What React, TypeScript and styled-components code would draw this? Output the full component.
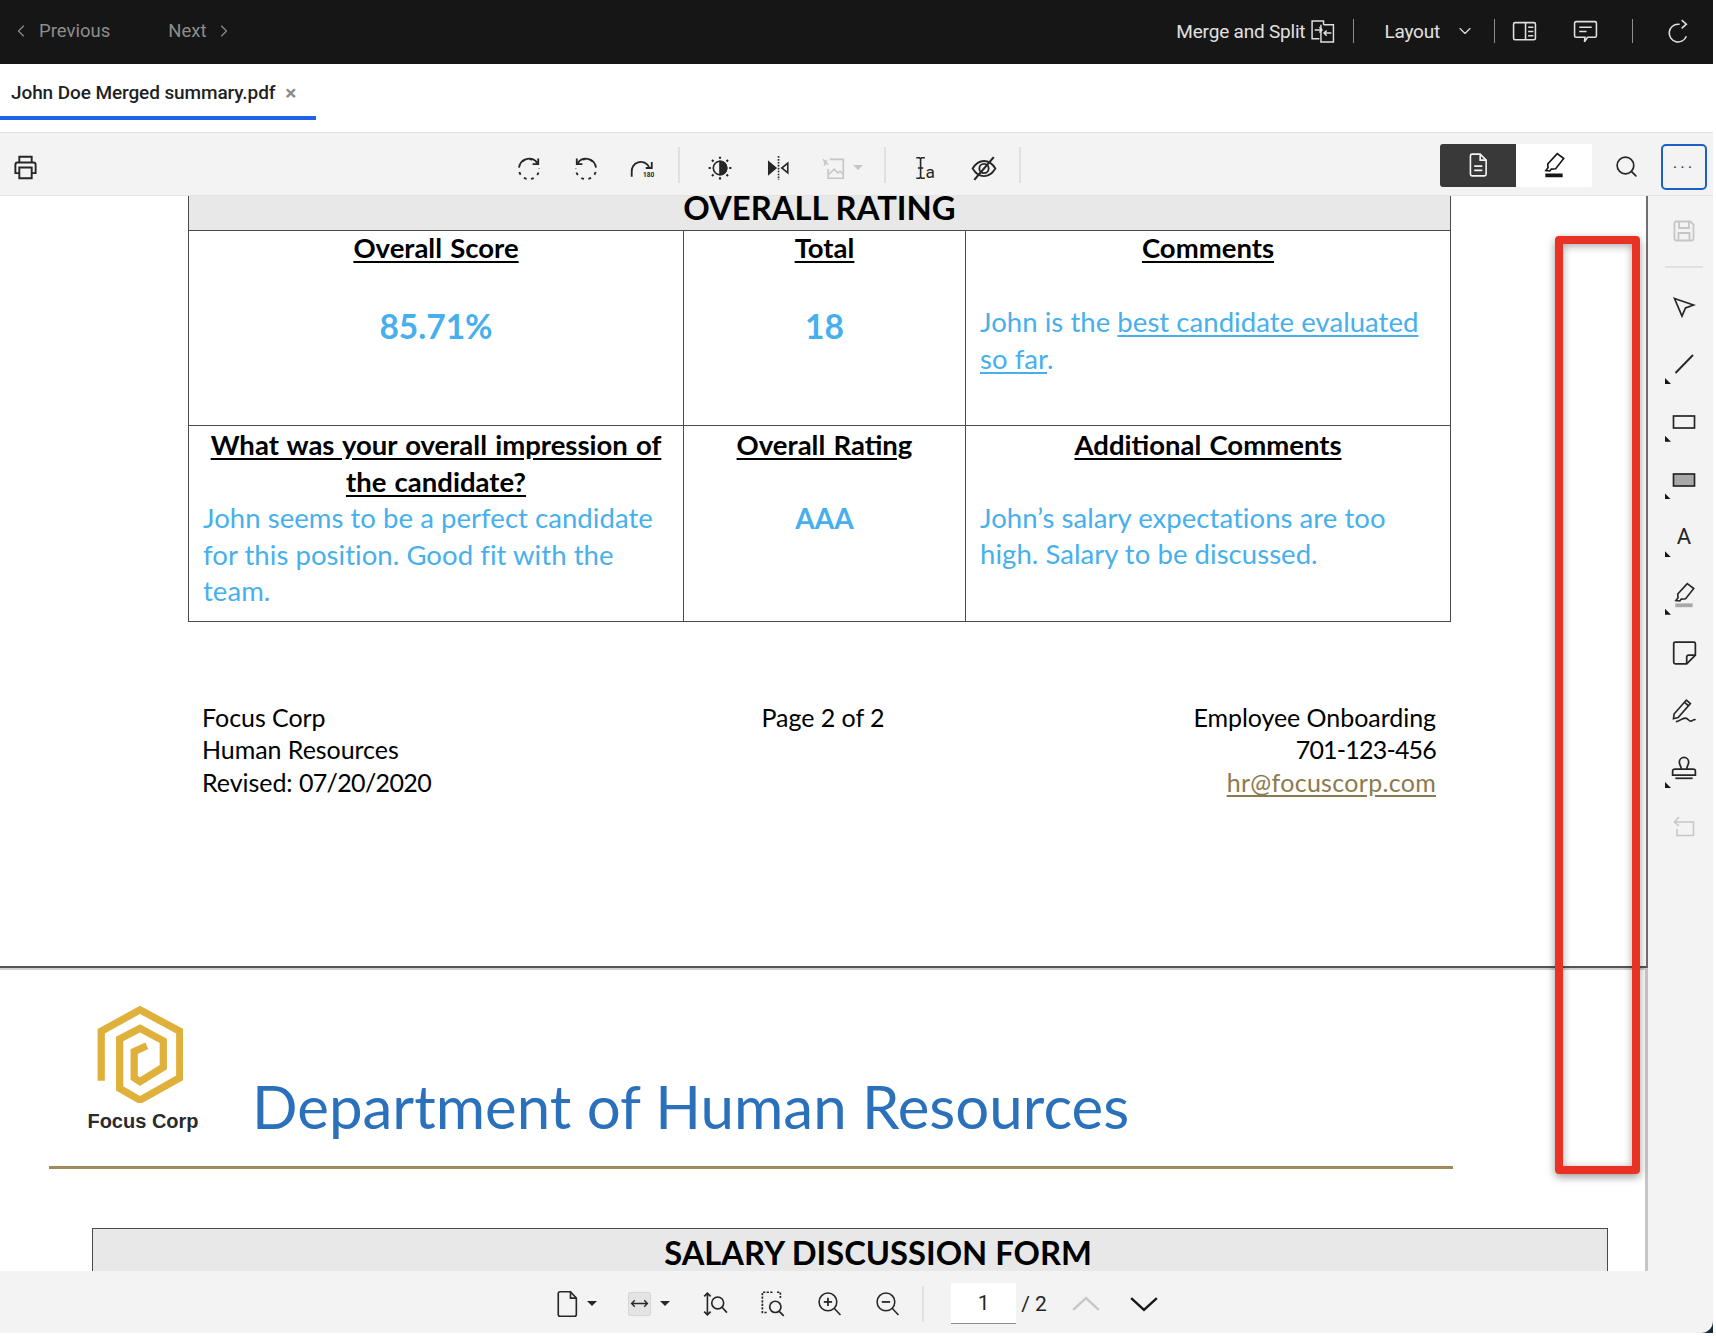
import React from "react";
import styled, { createGlobalStyle } from "styled-components";
import { ChevronDown, ChevronLeft, ChevronRight, Search } from "lucide-react";

type IconProps = { size?: number; stroke?: number; children: React.ReactNode };

const Icon = ({ size = 24, stroke = 1.5, children }: IconProps) => (
    <svg width={ size } height={ size } viewBox="0 0 24 24" fill="none" stroke="currentColor" strokeWidth={ stroke }>
        { children }
    </svg>
);

const DashedTurn = ({ flip }: { flip?: boolean }) => (
    <Icon size={ 26 } stroke={ 1.7 }>
        <g transform={ flip ? "matrix(-1 0 0 1 24 0)" : undefined }>
            <path d="M3.2 9.5A9.5 9.5 0 0 1 19.5 7" />
            <path d="M20.5 3.2v5.2h-5.2" />
            <circle cx="12" cy="13" r="9.3" strokeDasharray="2.6 4.2" strokeDashoffset="-10" />
        </g>
    </Icon>
);

const TurnHalf = () => (
    <Icon size={ 26 } stroke={ 1.7 }>
        <path d="M2.5 20V16a8.5 8.5 0 0 1 16-5" />
        <path d="M21 6.5V12h-5.5" />
        <text x="13" y="20" fontSize="6" fontFamily="Roboto" fontWeight="700" stroke="none" fill="currentColor">180</text>
    </Icon>
);

const Contrast = () => (
    <Icon size={ 26 } stroke={ 1.5 }>
        <circle cx="12" cy="12" r="6.2" />
        <path d="M12 5.8a6.2 6.2 0 0 1 0 12.4z" fill="currentColor" />
        <path d="M12 1.5v2M12 20.5v2M1.5 12h2M20.5 12h2M4.6 4.6l1.4 1.4M18 18l1.4 1.4M4.6 19.4L6 18M18 6l1.4-1.4" strokeWidth="2" />
    </Icon>
);

const Mirror = () => (
    <Icon size={ 26 } stroke={ 1.5 }>
        <path d="M3.5 6.5L10 12l-6.5 5.5z" fill="currentColor" />
        <path d="M21 7.5L15.5 12 21 16.5z" />
        <path d="M12.5 1v22" strokeDasharray="1.5 1.2" />
    </Icon>
);

const ImageOff = () => (
    <Icon size={ 26 } stroke={ 1.5 }>
        <path d="M9 4h12.5v17.5H7.5V13" />
        <path d="M8 18l5-5 3.5 3.5 2-1.5 3 3" />
        <path d="M2 3l3 2 2-1-1 2.5L8.5 9 5.5 8.5 3.5 10.5 4 7.5z" fill="currentColor" stroke="none" />
    </Icon>
);

const TextSelect = () => (
    <Icon size={ 26 } stroke={ 1.5 }>
        <path d="M3 2.5h3l1 1 1-1h3M7 3.5v17M3 21.5h3l1-1 1 1h3M4.5 12h5" />
        <text x="11.5" y="21" fontSize="16" fontFamily="Roboto" stroke="none" fill="currentColor">a</text>
    </Icon>
);

const EyeSlash = () => (
    <Icon size={ 26 } stroke={ 1.7 }>
        <path d="M1.5 12.5C4.5 7.5 8 5.5 12 5.5s7.5 2 10.5 7c-3 5-6.5 7-10.5 7s-7.5-2-10.5-7z" />
        <circle cx="12" cy="12.5" r="4.3" />
        <path d="M21 2L3 23" strokeWidth="2" />
    </Icon>
);

const Printer = () => (
    <Icon size={ 27 } stroke={ 1.7 }>
        <path d="M6.5 7.5V2.5h11v5" />
        <path d="M6.5 17H3V9.5a2 2 0 0 1 2-2h14a2 2 0 0 1 2 2V17h-3.5" />
        <path d="M6.5 12h11v9.5h-11z" />
    </Icon>
);

const PageNote = () => (
    <Icon size={ 26 } stroke={ 1.5 }>
        <path d="M5 3.5A1.5 1.5 0 0 1 6.5 2H14l5.5 5.5v13A1.5 1.5 0 0 1 18 22H6.5A1.5 1.5 0 0 1 5 20.5z" />
        <path d="M14 2v5.5h5.5M8.5 13h7.5M8.5 17h7.5" />
    </Icon>
);

const Marker = ({ bar = "currentColor" }: { bar?: string }) => (
    <Icon size={ 26 } stroke={ 1.5 }>
        <path d="M15 1.5L21 6l-7.5 9.5-4 .3-1.3 1.7-3.7-.3 2-2.7-.3-3.5z" />
        <path d="M4 21.5h16" stroke={ bar } strokeWidth="3.5" />
    </Icon>
);

const Merge = () => (
    <Icon size={ 25 } stroke={ 1.4 }>
        <path d="M13 5.5V2H2v17h7" />
        <path d="M13 5.5h9.5V22H10.5V5.5" />
        <path d="M4.5 10.5h7M9 8l2.5 2.5L9 13" />
        <path d="M20.5 13.5h-7M16 11l-2.5 2.5L16 16" />
    </Icon>
);

const SidePanel = () => (
    <Icon size={ 25 } stroke={ 1.5 }>
        <rect x="1.5" y="3.5" width="21" height="16.5" rx="1.5" />
        <path d="M13 3.5V20M15.5 8h5M15.5 12h5M15.5 16h5" />
    </Icon>
);

const Comment = () => (
    <Icon size={ 25 } stroke={ 1.5 }>
        <path d="M3 2.5h18a1.5 1.5 0 0 1 1.5 1.5v12a1.5 1.5 0 0 1-1.5 1.5h-7L11 22l.5-4.5H3A1.5 1.5 0 0 1 1.5 16V4A1.5 1.5 0 0 1 3 2.5z" />
        <path d="M6 8h12M6 12h7" />
    </Icon>
);

const Refresh = () => (
    <Icon size={ 25 } stroke={ 1.5 }>
        <path d="M14 5H12.5a8.5 8.5 0 1 0 8 11.5" />
        <path d="M16 1l4.5 4-4.5 4" />
    </Icon>
);

const ArrowTool = () => (
    <Icon size={ 24 } stroke={ 1.7 }>
        <path d="M2.5 3.5L21.5 10l-8 3-3.5 8z" />
    </Icon>
);

const LineTool = () => (
    <Icon size={ 24 } stroke={ 1.9 }>
        <path d="M3.5 21L21 3" />
    </Icon>
);

const RectTool = ({ filled }: { filled?: boolean }) => (
    <Icon size={ 24 } stroke={ 1.7 }>
        <rect x="1.5" y="6" width="21" height="12" fill={ filled ? "#a8a8a8" : "none" } />
    </Icon>
);

const NoteTool = () => (
    <Icon size={ 26 } stroke={ 1.6 }>
        <path d="M14.5 22H4a1.5 1.5 0 0 1-1.5-1.5v-17A1.5 1.5 0 0 1 4 2h17a1.5 1.5 0 0 1 1.5 1.5V14z" />
        <path d="M22.5 14h-6a2 2 0 0 0-2 2v6" />
    </Icon>
);

const SignTool = () => (
    <Icon size={ 28 } stroke={ 1.4 }>
        <path d="M3.5 15.5L14 3.5l3.5 3L7 18.5l-4 1z" />
        <path d="M12.5 5.5l3.5 3" />
        <path d="M5 22c3 0 5-3 8-3s3 3 5 2.5 2.5-2 4-1" />
    </Icon>
);

const StampTool = () => (
    <Icon size={ 26 } stroke={ 1.6 }>
        <path d="M9.5 13c0-3-1.8-3.5-1.8-6.5a4.3 4.3 0 0 1 8.6 0c0 3-1.8 3.5-1.8 6.5" />
        <path d="M3.5 13h17a2 2 0 0 1 2 2v3.5h-21V15a2 2 0 0 1 2-2z" />
        <path d="M4 21.5h16" />
    </Icon>
);

const UndoTool = () => (
    <Icon size={ 24 } stroke={ 1.5 }>
        <path d="M3 8h18.5v13.5H5V15" />
        <path d="M7 3L2.5 8 7 12" />
    </Icon>
);

const SaveTool = () => (
    <Icon size={ 24 } stroke={ 1.8 }>
        <path d="M2.5 4A1.5 1.5 0 0 1 4 2.5h14.5l3 3V20a1.5 1.5 0 0 1-1.5 1.5H4A1.5 1.5 0 0 1 2.5 20z" />
        <path d="M7 2.5v6.5h10V2.5M6.5 21.5V14h11v7.5" />
    </Icon>
);

const BlankPage = () => (
    <Icon size={ 28 } stroke={ 1.4 }>
        <path d="M4.5 3A1.5 1.5 0 0 1 6 1.5h9l5 5.5v14a1.5 1.5 0 0 1-1.5 1.5H6A1.5 1.5 0 0 1 4.5 21z" />
        <path d="M15 1.5V7h5" />
    </Icon>
);

const FitWidth = () => (
    <Icon size={ 19 } stroke={ 1.7 }>
        <path d="M2 12h20M6 8l-4 4 4 4M18 8l4 4-4 4" />
    </Icon>
);

const FitHeight = () => (
    <Icon size={ 26 } stroke={ 1.5 }>
        <path d="M5 2v20M2 5l3-3 3 3M2 19l3 3 3-3" />
        <circle cx="14.5" cy="11" r="5.5" />
        <path d="M18.5 15l4.5 5" />
    </Icon>
);

const FitPage = () => (
    <Icon size={ 27 } stroke={ 1.5 }>
        <path d="M12 2H3v18h5M16 2h3v5" strokeDasharray="2 1.2" />
        <circle cx="14.5" cy="15" r="5" />
        <path d="M18 19l4 4" />
    </Icon>
);

const ZoomGlass = ({ plus }: { plus?: boolean }) => (
    <Icon size={ 25 } stroke={ 1.5 }>
        <circle cx="10.5" cy="10.5" r="8.5" />
        <path d="M16.5 16.5l6 6.5" />
        <path d="M6.5 10.5h8" strokeWidth="1.7" />
        { plus && <path d="M10.5 6.5v8" strokeWidth="1.7" /> }
    </Icon>
);

const BigChevron = ({ up }: { up?: boolean }) => (
    <Icon size={ 28 } stroke={ 2 }>
        <path d={ up ? "M1 17L12 7l11 10" : "M1 7l11 10L23 7" } />
    </Icon>
);

const LogoMark = () => (
    <LogoSvg width="86" height="97" viewBox="0 0 88 100" fill="none" stroke="#dfb13a" strokeWidth="7.5">
        <path d="M4 77V26L44 4l41 22v48L44 97 23 85V34l21-11 24 13v27L44 78l-6-4V47l13-6" />
    </LogoSvg>
);

const App: React.FC = () => {
    // rail tools, top to bottom
    const tools = [
        { icon: <ArrowTool />, flyout: false, muted: false },
        { icon: <LineTool />, flyout: true, muted: false },
        { icon: <RectTool />, flyout: true, muted: false },
        { icon: <RectTool filled />, flyout: true, muted: false },
        { icon: <ToolLetter>A</ToolLetter>, flyout: true, muted: false },
        { icon: <Marker bar="#a8a8a8" />, flyout: true, muted: false },
        { icon: <NoteTool />, flyout: false, muted: false },
        { icon: <SignTool />, flyout: false, muted: false },
        { icon: <StampTool />, flyout: true, muted: false },
        { icon: <UndoTool />, flyout: false, muted: true },
    ];

    return <Screen>
        <GlobalStyle />
        <TopBar>
            <NavLink><ChevronLeft size={ 20 } strokeWidth={ 1.4 } />Previous</NavLink>
            <NavLink $ml={ 58 }>Next<ChevronRight size={ 20 } strokeWidth={ 1.4 } /></NavLink>
            <TopActions>
                <TopLabel>Merge and Split</TopLabel>
                <TopIcon $ml={ 5 }><Merge /></TopIcon>
                <TopDivider $ml={ 18 } />
                <TopLabel $ml={ 30 }>Layout</TopLabel>
                <TopIcon $ml={ 15 }><ChevronDown size={ 20 } strokeWidth={ 1.4 } /></TopIcon>
                <TopDivider $ml={ 19 } />
                <TopIcon $ml={ 17 }><SidePanel /></TopIcon>
                <TopIcon $ml={ 36 }><Comment /></TopIcon>
                <TopDivider $ml={ 34 } />
                <TopIcon $ml={ 32 }><Refresh /></TopIcon>
            </TopActions>
        </TopBar>

        <TabBar>
            <FileTab>
                John Doe Merged summary.pdf
                <TabClose>×</TabClose>
            </FileTab>
        </TabBar>

        <ToolBar>
            <ToolButton $w={ 50 }><Printer /></ToolButton>
            <CenterTools>
                <ToolButton $w={ 56.5 }><DashedTurn /></ToolButton>
                <ToolButton $w={ 56.5 }><DashedTurn flip /></ToolButton>
                <ToolButton $w={ 56.5 }><TurnHalf /></ToolButton>
                <ToolDivider $ml={ 7 } $mr={ 11 } />
                <ToolButton $w={ 58 }><Contrast /></ToolButton>
                <ToolButton $w={ 58 }><Mirror /></ToolButton>
                <ToolButton $w={ 58 } $muted $indent><ImageOff /><Caret $ml={ 7 } $muted /></ToolButton>
                <ToolDivider $ml={ 19 } $mr={ 11 } />
                <ToolButton $w={ 58 }><TextSelect /></ToolButton>
                <ToolButton $w={ 58 }><EyeSlash /></ToolButton>
                <ToolDivider $ml={ 6 } />
            </CenterTools>
            <ViewToggle>
                <ToggleHalf $active><PageNote /></ToggleHalf>
                <ToggleHalf><Marker /></ToggleHalf>
            </ViewToggle>
            <SearchSlot><Search size={ 25 } strokeWidth={ 1.6 } /></SearchSlot>
            <MoreButton>···</MoreButton>
        </ToolBar>

        <Workspace>
            <Viewer>
                <PageOne>
                    <RatingTable>
                        <colgroup>
                            <col width="495" />
                            <col width="282" />
                            <col width="485" />
                        </colgroup>
                        <tbody>
                            <tr>
                                <TitleCell colSpan={ 3 }>OVERALL RATING</TitleCell>
                            </tr>
                            <ScoreRow>
                                <Cell $center>
                                    <CellHead $raised>Overall Score</CellHead>
                                    <ScoreValue>85.71%</ScoreValue>
                                </Cell>
                                <Cell $center>
                                    <CellHead $raised>Total</CellHead>
                                    <ScoreValue>18</ScoreValue>
                                </Cell>
                                <Cell>
                                    <CellHead $center $raised>Comments</CellHead>
                                    <Answer $gap={ 38 }>John is the <u>best candidate evaluated so far</u>.</Answer>
                                </Cell>
                            </ScoreRow>
                            <ScoreRow>
                                <Cell>
                                    <CellHead $center>What was your overall impression of the candidate?</CellHead>
                                    <Answer>John seems to be a perfect candidate for this position. Good fit with the team.</Answer>
                                </Cell>
                                <Cell $center>
                                    <CellHead>Overall Rating</CellHead>
                                    <GradeValue>AAA</GradeValue>
                                </Cell>
                                <Cell>
                                    <CellHead $center>Additional Comments</CellHead>
                                    <Answer $gap={ 36 }>John’s salary expectations are too high. Salary to be discussed.</Answer>
                                </Cell>
                            </ScoreRow>
                        </tbody>
                    </RatingTable>
                    <PageFooter>
                        <div>Focus Corp<br />Human Resources<br />Revised: <Tracked $ls={ -0.65 }>07/20/2020</Tracked></div>
                        <FooterMiddle>Page 2 of 2</FooterMiddle>
                        <FooterRight>
                            Employee Onboarding<br />
                            <Tracked $ls={ -0.8 }>701-123-456</Tracked><br />
                            <MailLink>hr@focuscorp.com</MailLink>
                        </FooterRight>
                    </PageFooter>
                </PageOne>
                <PageTwo>
                    <LetterHead>
                        <LogoBlock>
                            <LogoMark />
                            <LogoName>Focus Corp</LogoName>
                        </LogoBlock>
                        <DeptTitle>Department of Human Resources</DeptTitle>
                    </LetterHead>
                    <GoldRule />
                    <FormBox>SALARY DISCUSSION FORM</FormBox>
                </PageTwo>
                <Callout />
            </Viewer>
            <SideRail>
                <RailButton $muted $first><SaveTool /></RailButton>
                <RailDivider />
                { tools.map((tool, i) => (
                    <RailButton key={ i } $muted={ tool.muted }>
                        { tool.icon }
                        { tool.flyout && <Flyout /> }
                    </RailButton>
                )) }
            </SideRail>
        </Workspace>

        <BottomBar>
            <BottomIcon><BlankPage /></BottomIcon>
            <Caret $ml={ 6 } />
            <FitBox $ml={ 31 }><FitWidth /></FitBox>
            <Caret $ml={ 9 } />
            <BottomIcon $ml={ 32 }><FitHeight /></BottomIcon>
            <BottomIcon $ml={ 31 }><FitPage /></BottomIcon>
            <BottomIcon $ml={ 31 }><ZoomGlass plus /></BottomIcon>
            <BottomIcon $ml={ 33 }><ZoomGlass /></BottomIcon>
            <BottomDivider />
            <PageInput>1</PageInput>
            <PageTotal>/ 2</PageTotal>
            <PageArrow $ml={ 25 } $muted><BigChevron up /></PageArrow>
            <PageArrow $ml={ 30 }><BigChevron /></PageArrow>
        </BottomBar>
    </Screen>
}

export default App;

const GlobalStyle = createGlobalStyle`
  * {
    box-sizing: border-box;
  }

  body {
    margin: 0;
    background: #fff;
    font-family: Roboto, "Liberation Sans", sans-serif;
  }
`;

const Screen = styled.div`
  width: 1713px;
  height: 1333px;
  display: flex;
  flex-direction: column;
  background: #0f2b3d;
  overflow: hidden;
`;

const TopBar = styled.header`
  height: 64px;
  flex: none;
  display: flex;
  align-items: center;
  padding: 0 23px 2px 11px;
  background: #161616;
  color: #8d8d8d;
  font-size: 18.5px;
`;

const NavLink = styled.span<{ $ml?: number }>`
  display: flex;
  align-items: center;
  gap: 8px;
  margin-left: ${ props => props.$ml ?? 0 }px;
`;

const TopActions = styled.div`
  margin-left: auto;
  display: flex;
  align-items: center;
  color: #e0e0e0;
`;

const TopLabel = styled.span<{ $ml?: number }>`
  margin-left: ${ props => props.$ml ?? 0 }px;
  font-size: 19px;
  letter-spacing: -0.2px;
`;

const TopIcon = styled.span<{ $ml?: number }>`
  display: flex;
  margin-left: ${ props => props.$ml ?? 0 }px;
`;

const TopDivider = styled.span<{ $ml: number }>`
  width: 1px;
  height: 24px;
  margin-left: ${ props => props.$ml }px;
  background: #8d8d8d;
`;

const TabBar = styled.div`
  height: 69px;
  flex: none;
  background: #fff;
  border-bottom: 1px solid #e0e0e0;
`;

const FileTab = styled.div`
  width: 316px;
  height: 56px;
  display: flex;
  align-items: center;
  padding: 5px 0 0 11px;
  border-bottom: 4px solid #1f62e8;
  color: #1f1f1f;
  font-size: 19px;
  font-weight: 500;
  letter-spacing: -0.1px;
`;

const TabClose = styled.span`
  margin-left: 10px;
  color: #8d8d8d;
  font-size: 21px;
  font-weight: 700;
`;

const ToolBar = styled.div`
  height: 63px;
  flex: none;
  display: flex;
  align-items: center;
  padding: 2px 6px 0 0;
  background: #f3f3f3;
  border-bottom: 1px solid #e3e3e3;
  color: #262626;
`;

const CenterTools = styled.div`
  display: flex;
  align-items: center;
  margin-left: 451px;
`;

const ToolButton = styled.span<{ $w: number; $muted?: boolean; $indent?: boolean }>`
  width: ${ props => props.$w }px;
  height: 40px;
  flex: none;
  display: flex;
  align-items: center;
  justify-content: center;
  padding: 5px 0 0 ${ props => props.$indent ? "12px" : "0" };
  color: ${ props => props.$muted ? "#c6c6c6" : "inherit" };
`;

const ToolDivider = styled.span<{ $ml: number; $mr?: number }>`
  width: 2px;
  height: 36px;
  margin: 0 ${ props => props.$mr ?? 0 }px 0 ${ props => props.$ml }px;
  background: #e0e0e0;
`;

const Caret = styled.span<{ $ml?: number; $muted?: boolean }>`
  width: 0;
  height: 0;
  flex: none;
  margin-left: ${ props => props.$ml ?? 0 }px;
  border-left: 5px solid transparent;
  border-right: 5px solid transparent;
  border-top: 5px solid ${ props => props.$muted ? "#c6c6c6" : "#262626" };
`;

const ViewToggle = styled.div`
  margin-left: auto;
  width: 152px;
  height: 43px;
  display: flex;
  border-radius: 3px;
  overflow: hidden;
  background: #fff;
`;

const ToggleHalf = styled.span<{ $active?: boolean }>`
  flex: 1;
  display: flex;
  align-items: center;
  justify-content: center;
  background: ${ props => props.$active ? "#393939" : "#fff" };
  color: ${ props => props.$active ? "#f4f4f4" : "#161616" };
`;

const SearchSlot = styled.span`
  display: flex;
  margin: 3px 22px 0 22px;
`;

const MoreButton = styled.span`
  width: 46px;
  height: 46px;
  display: flex;
  align-items: center;
  justify-content: center;
  margin-top: 4px;
  border: 2px solid #1c5fc9;
  border-radius: 5px;
  font-size: 17px;
  letter-spacing: 3px;
  color: #393939;
`;

const Workspace = styled.div`
  flex: 1;
  min-height: 0;
  display: flex;
`;

const Viewer = styled.main`
  position: relative;
  flex: 1;
  min-width: 0;
  overflow: hidden;
  background: #fff;
  font-family: Lato, "Open Sans", sans-serif;
  color: #000;
`;

const PageOne = styled.section`
  height: 772px;
  padding-left: 188px;
  border-right: 2px solid #6f6f6f;
  border-bottom: 2px solid #555;
`;

const RatingTable = styled.table`
  width: 1262px;
  border-collapse: collapse;
  table-layout: fixed;
`;

const TitleCell = styled.td`
  height: 34px;
  padding: 0 0 9px;
  border: 1.5px solid #4a4a4a;
  border-top: 0;
  background: #e8e8e8;
  text-align: center;
  font-size: 32.8px;
  font-weight: 700;
  line-height: 24px;
`;

const ScoreRow = styled.tr`
  height: 195.5px;
`;

const Cell = styled.td<{ $center?: boolean }>`
  padding: 1px 14px 0;
  border: 1.5px solid #4a4a4a;
  vertical-align: top;
  text-align: ${ props => props.$center ? "center" : "left" };
  font-size: 27.5px;
  line-height: 36.5px;
`;

const CellHead = styled.div<{ $center?: boolean; $raised?: boolean }>`
  margin-top: ${ props => props.$raised ? "-2px" : "0" };
  font-weight: 700;
  word-spacing: 1.5px;
  text-decoration: underline;
  text-underline-offset: 3px;
  text-align: ${ props => props.$center ? "center" : "inherit" };
`;

const ScoreValue = styled.div`
  margin-top: 42px;
  color: #47b0ec;
  font-size: 33.5px;
  font-weight: 700;
`;

const GradeValue = styled.div`
  margin-top: 36px;
  color: #47b0ec;
  font-size: 28px;
  font-weight: 700;
`;

const Answer = styled.div<{ $gap?: number }>`
  margin-top: ${ props => props.$gap ?? 0 }px;
  color: #47b0ec;
  letter-spacing: 0.05px;

  u {
    text-underline-offset: 3px;
  }
`;

const PageFooter = styled.div`
  width: 1234px;
  margin: 79px 0 0 14px;
  display: grid;
  grid-template-columns: 1fr auto 1fr;
  font-size: 25px;
  line-height: 32.8px;
  letter-spacing: -0.05px;
`;

const FooterMiddle = styled.div`
  padding-left: 8px;
`;

const FooterRight = styled.div`
  text-align: right;
`;

const Tracked = styled.span<{ $ls: number }>`
  letter-spacing: ${ props => props.$ls }px;
`;

const MailLink = styled.span`
  color: #8c7a4f;
  letter-spacing: 0.3px;
  text-decoration: underline;
  text-underline-offset: 3px;
`;

const PageTwo = styled.section`
  height: 400px;
  border-right: 3px solid #c6c6c6;
  border-top: 2px solid #d0d0d0;
`;

const LetterHead = styled.div`
  height: 196px;
  display: flex;
  align-items: flex-start;
  padding: 36px 0 0 86px;
`;

const LogoBlock = styled.div`
  width: 114px;
  display: flex;
  flex-direction: column;
  align-items: center;
`;

const LogoSvg = styled.svg`
  margin-right: 6px;
`;

const LogoName = styled.div`
  margin-top: 7px;
  font-family: "Liberation Sans", Arial, sans-serif;
  font-size: 20px;
  font-weight: 700;
  color: #2b2b2b;
  white-space: nowrap;
`;

const DeptTitle = styled.h1`
  margin: 65px 0 0 52px;
  color: #2a70bb;
  font-size: 60px;
  font-weight: 400;
  line-height: 70px;
  white-space: nowrap;
`;

const GoldRule = styled.div`
  width: 1404px;
  height: 3px;
  margin-left: 49px;
  background: #a08c5b;
`;

const FormBox = styled.div`
  width: 1516px;
  height: 80px;
  margin: 59px 0 0 92px;
  padding: 4px 0 0 56px;
  border: 1.5px solid #4a4a4a;
  background: #e8e8e8;
  text-align: center;
  font-size: 32.7px;
  font-weight: 700;
  line-height: 40px;
`;

const Callout = styled.div`
  position: absolute;
  top: 40px;
  left: 1555px;
  width: 85px;
  height: 938px;
  border: 8.5px solid #e93223;
  border-radius: 4px;
  box-shadow: 0 3px 8px rgba(0, 0, 0, 0.4), inset 0 2px 8px rgba(0, 0, 0, 0.35);
`;

const SideRail = styled.aside`
  width: 65px;
  flex: none;
  display: flex;
  flex-direction: column;
  align-items: center;
  background: #f3f3f3;
  color: #262626;
`;

const RailButton = styled.span<{ $muted?: boolean; $first?: boolean }>`
  position: relative;
  width: 65px;
  height: 57.7px;
  flex: none;
  margin-top: ${ props => props.$first ? "6px" : "0" };
  display: flex;
  align-items: center;
  justify-content: center;
  padding-left: 7px;
  color: ${ props => props.$muted ? "#c6c6c6" : "inherit" };
`;

const RailDivider = styled.span`
  width: 38px;
  height: 2px;
  flex: none;
  margin: 6px 0 10px 6px;
  background: #e0e0e0;
`;

const ToolLetter = styled.span`
  font-size: 22px;
  line-height: 24px;
`;

const Flyout = styled.i`
  position: absolute;
  left: 17px;
  bottom: 9px;
  width: 6px;
  height: 6px;
  background: #161616;
  clip-path: polygon(0 0, 100% 100%, 0 100%);
`;

const BottomBar = styled.footer`
  height: 62px;
  flex: none;
  display: flex;
  align-items: center;
  justify-content: center;
  padding: 3px 2px 0 0;
  background: #f3f3f3;
  border-bottom-right-radius: 12px;
  color: #262626;
`;

const BottomIcon = styled.span<{ $ml?: number }>`
  display: flex;
  margin-left: ${ props => props.$ml ?? 0 }px;
`;

const FitBox = styled.span<{ $ml: number }>`
  width: 23px;
  height: 24px;
  display: flex;
  align-items: center;
  justify-content: center;
  margin-left: ${ props => props.$ml }px;
  background: #e4e4e4;
  border: 1px solid #d6d6d6;
  border-radius: 2px;
`;

const BottomDivider = styled.span`
  width: 2px;
  height: 36px;
  margin: 0 27px 0 22px;
  background: #e0e0e0;
`;

const PageInput = styled.span`
  width: 65px;
  height: 41px;
  display: flex;
  align-items: center;
  justify-content: center;
  background: #fff;
  border-bottom: 1px solid #8d8d8d;
  font-size: 21px;
`;

const PageTotal = styled.span`
  margin-left: 5px;
  font-size: 21px;
`;

const PageArrow = styled.span<{ $ml: number; $muted?: boolean }>`
  display: flex;
  margin-left: ${ props => props.$ml }px;
  color: ${ props => props.$muted ? "#c6c6c6" : "#161616" };
`;
